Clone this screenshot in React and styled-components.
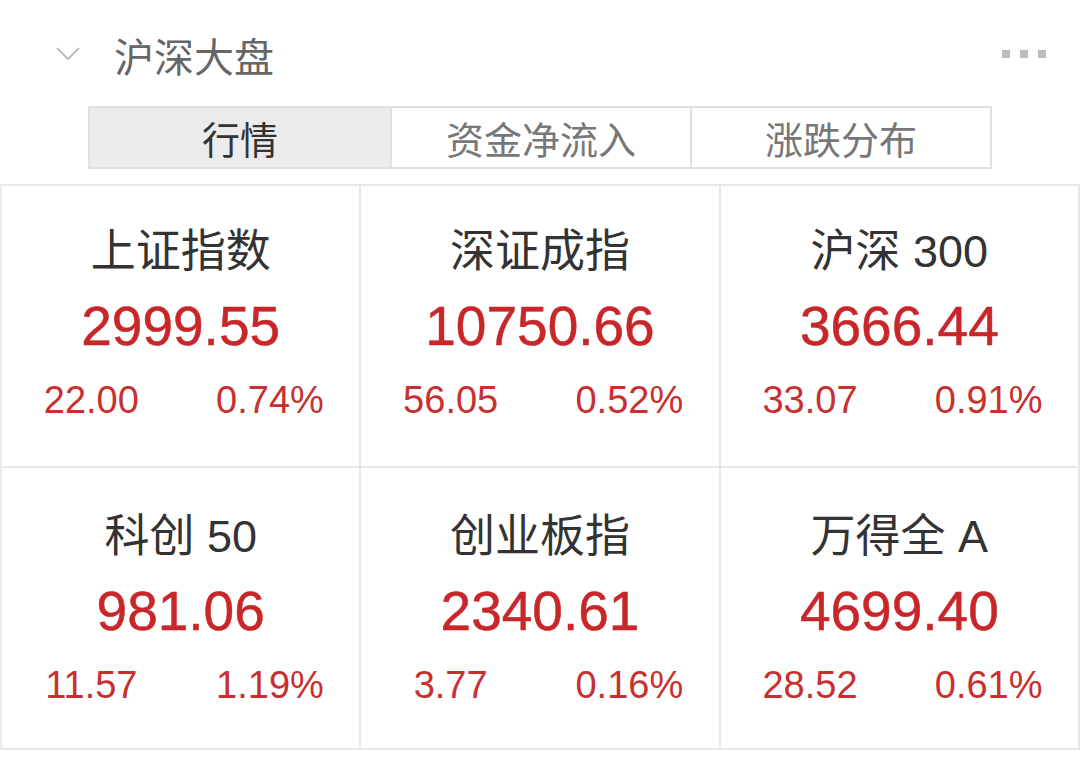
import React, { useState } from 'react';
import styled, { createGlobalStyle } from 'styled-components';

const GlobalStyle = createGlobalStyle`
  body {
    margin: 0;
    background: #fff;
    font-family: "Liberation Sans", "Noto Sans CJK SC", sans-serif;
  }
`;

const Panel = styled.div`
  width: 1080px;
  height: 760px;
  background: #fff;
  overflow: hidden;
`;

const Header = styled.div`
  height: 92px;
  box-sizing: border-box;
  padding: 18px 34px 0 55px;
  display: flex;
  align-items: center;
`;

const Title = styled.div`
  margin-left: 33px;
  font-size: 40px;
  line-height: 74px;
  color: #666;
  font-family: "Noto Sans CJK SC", sans-serif;
  flex: 1;
`;

const Dots = styled.div`
  display: flex;
  gap: 10px;
  margin-top: -2px;
`;

const Dot = styled.span`
  width: 8px;
  height: 8px;
  background: #bdbdbd;
`;

const Tabs = styled.div`
  margin: 14px 0 0 88px;
  width: 904px;
  height: 63px;
  box-sizing: border-box;
  border: 2px solid #e0e0e0;
  display: grid;
  grid-template-columns: repeat(3, 1fr);
`;

const Tab = styled.div`
  display: flex;
  align-items: center;
  justify-content: center;
  font-family: "Noto Sans CJK SC", sans-serif;
  font-size: 38px;
  color: ${({ active }) => (active ? '#333' : '#777')};
  background: ${({ active }) => (active ? '#ebebeb' : '#fff')};
  & + & {
    border-left: 2px solid #e0e0e0;
  }
  cursor: pointer;
`;

const Grid = styled.div`
  margin-top: 15px;
  display: grid;
  grid-template-columns: repeat(3, 1fr);
  border-top: 2px solid #e8e8e8;
  border-left: 2px solid #ececec;
`;

const Cell = styled.div`
  border-right: 2px solid #e8e8e8;
  border-bottom: 2px solid #e8e8e8;
  display: flex;
  flex-direction: column;
  align-items: center;
  padding-top: ${({ second }) => (second ? 44 : 41)}px;
  height: ${({ second }) => 280 - (second ? 44 : 41)}px;
`;

const Name = styled.div`
  font-family: "Liberation Sans", "Noto Sans CJK SC", sans-serif;
  font-size: 45px;
  line-height: 50px;
  color: #333;
  white-space: pre;
`;

const Value = styled.div`
  margin-top: 19px;
  font-size: 55px;
  line-height: 60px;
  color: #c9262a;
  -webkit-text-stroke: 0.5px #c9262a;
`;

const Changes = styled.div`
  margin-top: 22px;
  width: 100%;
  display: grid;
  grid-template-columns: 1fr 1fr;
`;

const Change = styled.div`
  text-align: center;
  font-size: 38px;
  line-height: 44px;
  color: #c8302f;
`;

const indices = [
  { name: '上证指数', value: '2999.55', diff: '22.00', pct: '0.74%' },
  { name: '深证成指', value: '10750.66', diff: '56.05', pct: '0.52%' },
  { name: '沪深 300', value: '3666.44', diff: '33.07', pct: '0.91%' },
  { name: '科创 50', value: '981.06', diff: '11.57', pct: '1.19%' },
  { name: '创业板指', value: '2340.61', diff: '3.77', pct: '0.16%' },
  { name: '万得全 A', value: '4699.40', diff: '28.52', pct: '0.61%' },
];

const tabs = ['行情', '资金净流入', '涨跌分布'];

const Chevron = () => (
  <svg width="26" height="16" viewBox="0 0 26 16" style={{ marginTop: -2 }}>
    <path d="M2 2 L13 13 L24 2" fill="none" stroke="#bdbdbd" strokeWidth="2" />
  </svg>
);

export default function App() {
  const [active, setActive] = useState(0);
  return (
    <>
      <GlobalStyle />
      <Panel>
        <Header>
          <Chevron />
          <Title>沪深大盘</Title>
          <Dots>
            <Dot />
            <Dot />
            <Dot />
          </Dots>
        </Header>
        <Tabs>
          {tabs.map((t, i) => (
            <Tab key={t} active={i === active} onClick={() => setActive(i)}>
              {t}
            </Tab>
          ))}
        </Tabs>
        <Grid>
          {indices.map((item, i) => (
            <Cell key={item.name} second={i > 2}>
              <Name>{item.name}</Name>
              <Value>{item.value}</Value>
              <Changes>
                <Change>{item.diff}</Change>
                <Change>{item.pct}</Change>
              </Changes>
            </Cell>
          ))}
        </Grid>
      </Panel>
    </>
  );
}
